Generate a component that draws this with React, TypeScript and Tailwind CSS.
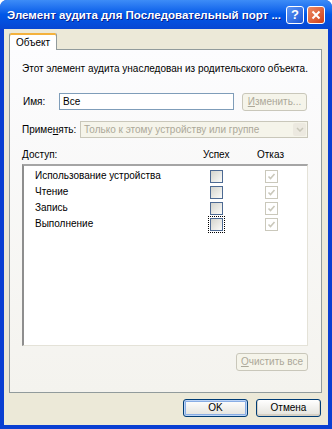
import React from "react";

const ui = "font-['Liberation_Sans',Arial,sans-serif] text-[10px] leading-[12px] text-black";

function XpCheck({ checked, disabled, focus }: { checked?: boolean; disabled?: boolean; focus?: boolean }) {
  const box = disabled
    ? "border-[#cac8bb] bg-white"
    : "border-[#4d6a93] bg-gradient-to-br from-[#d4d4cd] to-[#fbfbf9]";
  return (
    <span className={`flex h-[13px] w-[13px] items-center justify-center border ${box} ${focus ? "outline-1 outline-dotted outline-black outline-offset-1" : ""}`}>
      {checked && (
        <svg width="9" height="9" viewBox="0 0 9 9">
          <path d="M1.5 4.5 L3.5 6.5 L7.5 2" fill="none" stroke={disabled ? "#cac8bb" : "#21a121"} strokeWidth="1.6" />
        </svg>
      )}
    </span>
  );
}

function XpButton({ children, disabled, primary, className }: { children: React.ReactNode; disabled?: boolean; primary?: boolean; className?: string }) {
  const look = disabled
    ? "border-[#c9c7ba] bg-[#f5f4ea] text-[#aca899]"
    : primary
    ? "border-[#003c74] bg-gradient-to-b from-white to-[#e3e2dc] shadow-[inset_0_0_0_1px_#bcd4f6,inset_0_0_0_2px_#89ade4]"
    : "border-[#003c74] bg-gradient-to-b from-white to-[#e3e2dc] shadow-[inset_0_-1px_0_1px_#d6d0c5]";
  return (
    <div className={`flex h-[18px] items-center justify-center rounded-[3px] border ${look} ${className ?? ""}`}>
      {children}
    </div>
  );
}

const rows = ["Использование устройства", "Чтение", "Запись", "Выполнение"];

export default function App() {
  return (
    <div className={`flex h-[429px] w-[332px] flex-col rounded-t-[7px] bg-[#0a3fd2] ${ui}`}>
      {/* title bar */}
      <div className="flex h-[29px] items-center rounded-t-[7px] bg-gradient-to-b from-[#3d8cf7] via-[#0058e8] to-[#0746d3] pl-[7px] pr-[7px]">
        <span className="flex-1 whitespace-nowrap text-[11.5px] font-bold leading-[14px] text-white [text-shadow:1px_1px_0_#0a1e8c]">
          Элемент аудита для Последовательный порт ...
        </span>
        <div className="flex gap-[3px]">
          <div className="flex h-[18px] w-[18px] items-center justify-center rounded-[3px] border border-white bg-gradient-to-br from-[#5c95f5] to-[#1d56d6] text-[13px] font-bold leading-none text-white">
            ?
          </div>
          <div className="flex h-[18px] w-[18px] items-center justify-center rounded-[3px] border border-white bg-gradient-to-br from-[#ee8a63] to-[#cf3d12]">
            <svg width="10" height="10" viewBox="0 0 10 10">
              <path d="M1.5 1.5 L8.5 8.5 M8.5 1.5 L1.5 8.5" stroke="white" strokeWidth="2" />
            </svg>
          </div>
        </div>
      </div>

      {/* body */}
      <div className="mx-[4px] mb-[4px] flex flex-1 flex-col bg-[#ece9d8] pl-[5px] pr-[6px] pt-[4px]">
        {/* tab strip */}
        <div className="flex">
          <div className="relative z-10 -mb-px flex h-[17px] w-[48px] items-start justify-center rounded-t-[2px] border-x border-[#919b9c] bg-white pt-[4px] shadow-[inset_0_2px_0_#f4b23d]">
            Объект
          </div>
        </div>

        {/* tab panel */}
        <div className="flex h-[344px] flex-col border border-[#919b9c] bg-gradient-to-b from-[#fcfcfe] to-[#f4f3ee] pl-[12px] pr-[13px]">
          <div className="mt-[13px]">Этот элемент аудита унаследован из родительского объекта.</div>

          <div className="mt-[18px] flex h-[17px] items-center">
            <span className="ml-[1px] w-[36px]">Имя:</span>
            <div className="flex h-[17px] w-[175px] items-center border border-[#7f9db9] bg-white pl-[3px]">Все</div>
            <XpButton disabled className="ml-[8px] w-[65px]">
              <span><span className="underline">И</span>зменить...</span>
            </XpButton>
          </div>

          <div className="mt-[11px] flex h-[17px] items-center">
            <span className="w-[58px]">
              Приме<span className="underline">н</span>ять:
            </span>
            <div className="flex h-[17px] w-[228px] items-center border border-[#c9c7ba] bg-[#f5f4ea] pl-[3px] text-[#aca899]">
              <span className="flex-1">Только к этому устройству или группе</span>
              <div className="mr-px flex h-[13px] w-[13px] items-center justify-center rounded-[2px] bg-[#ece9e0]">
                <svg width="8" height="5" viewBox="0 0 8 5">
                  <path d="M1 1 L4 4 L7 1" fill="none" stroke="#c9c7ba" strokeWidth="1.5" />
                </svg>
              </div>
            </div>
          </div>

          <div className="mt-[11px] flex">
            <span className="w-[181px]">
              <span className="underline">Д</span>оступ:
            </span>
            <span className="w-[54px]">Успех</span>
            <span>Отказ</span>
          </div>

          <div className="mt-[3px] flex h-[182px] w-[286px] flex-col border-l-2 border-t-2 border-b border-r border-l-[#8e8e8e] border-t-[#a5a5a5] border-b-[#e4e2d8] border-r-[#e4e2d8] bg-white pl-[11px] pt-[2px]">
            {rows.map((r, i) => (
              <div key={r} className="flex h-[16px] items-center">
                <span className="w-[175px]">{r}</span>
                <XpCheck focus={i === 3} />
                <span className="ml-[42px]">
                  <XpCheck checked disabled />
                </span>
              </div>
            ))}
          </div>

          <XpButton disabled className="mt-[7px] w-[72px] self-end">
            <span><span className="underline">О</span>чистить все</span>
          </XpButton>
        </div>

        {/* dialog buttons */}
        <div className="mr-px mt-[6px] flex justify-end gap-[8px]">
          <XpButton primary className="w-[65px]">OK</XpButton>
          <XpButton className="w-[65px]">Отмена</XpButton>
        </div>
      </div>
    </div>
  );
}
